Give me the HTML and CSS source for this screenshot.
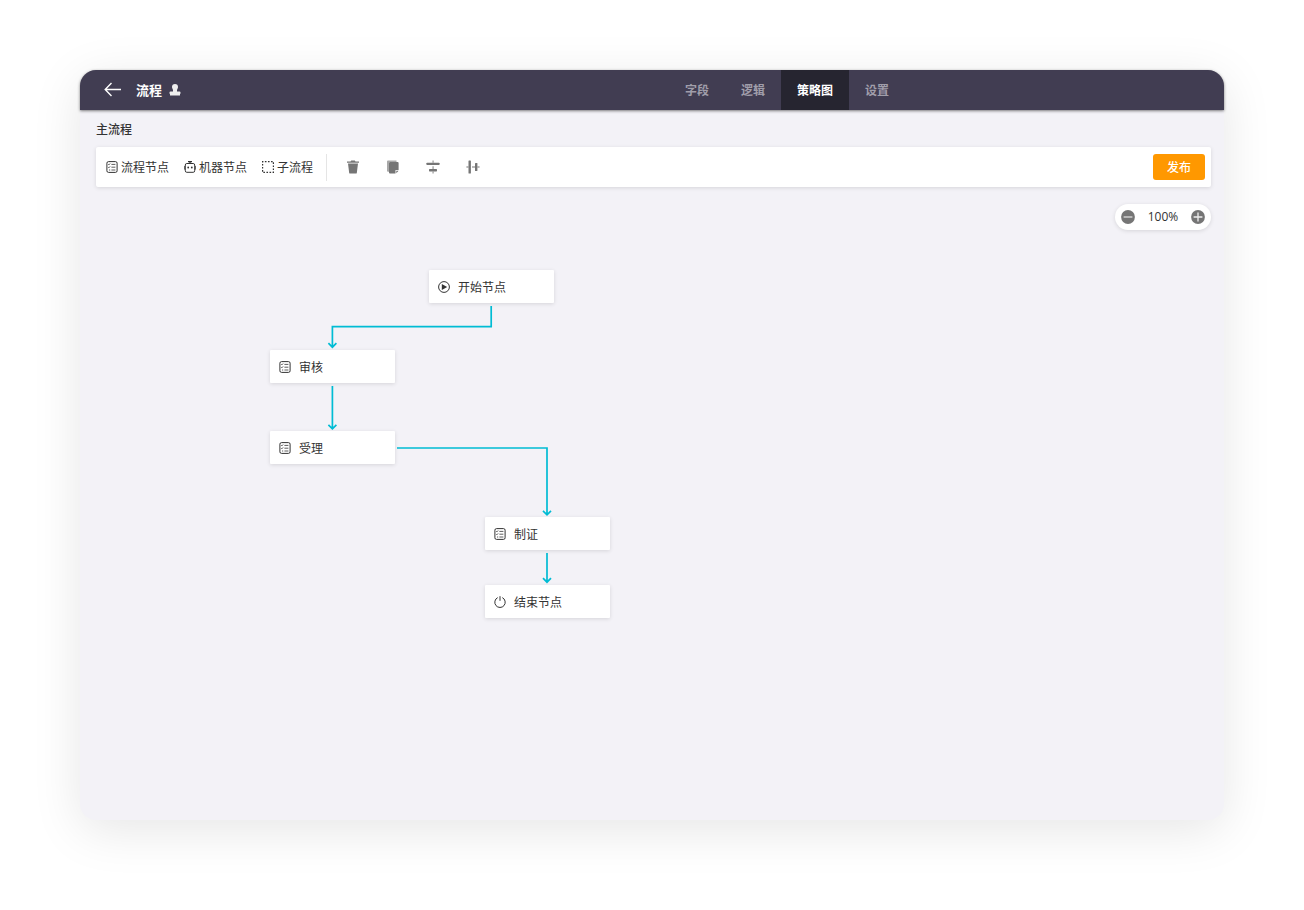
FILE: index.html
```html
<!DOCTYPE html>
<html lang="zh-CN">
<head>
<meta charset="utf-8">
<meta name="viewport" content="width=device-width, initial-scale=1">
<title>流程 - 策略图</title>
<link rel="stylesheet" href="styles.css">
</head>
<body>
<svg class="sprite" aria-hidden="true">
  <symbol id="icon-form" viewBox="0 0 12 12">
    <rect x="0.9" y="0.6" width="10.2" height="10.8" rx="1.6" fill="none" stroke="currentColor" stroke-width="1"/>
    <path d="M2.200 3.200l.7.7 1.200-1.400M2.200 6.100l.7.7 1.200-1.400M3 9h1.200M5.400 3.400h4M5.400 6.200h4M5.400 9h4" fill="none" stroke="currentColor" stroke-width="0.8"/>
  </symbol>
</svg>
<div class="window">
  <header class="topbar">
    <div class="title-group">
      <button class="back" type="button" aria-label="返回">
        <svg width="18" height="16" viewBox="0 0 18 16" fill="none" stroke="currentColor" stroke-width="1.400"><path d="M17 7.500H1.500M7.500 1L1.200 7.500l6.300 6.500"/></svg>
      </button>
      <h1 class="title">流程</h1>
      <svg class="stamp" width="12" height="12" viewBox="0 0 12 12" fill="currentColor" aria-hidden="true"><path d="M6 0a3 3 0 0 1 3 3c0 1.500-1 2-1 3.600V7.400h2.500a1 1 0 0 1 1 1V9.800H.5V8.400a1 1 0 0 1 1-1H4V6.600C4 5 3 4.500 3 3a3 3 0 0 1 3-3zM1 9.800h10v1.600H1z"/></svg>
    </div>
    <nav class="tabs">
      <a class="tab" href="#fields">字段</a>
      <a class="tab" href="#logic">逻辑</a>
      <a class="tab tab-active" href="#strategy" aria-current="page">策略图</a>
      <a class="tab" href="#settings">设置</a>
    </nav>
  </header>
  <main class="workspace">
    <h2 class="subtitle">主流程</h2>
    <div class="toolbar">
      <div class="tools">
        <button class="tool" type="button"><svg width="12" height="12" aria-hidden="true"><use href="#icon-form"/></svg>流程节点</button>
        <button class="tool" type="button"><svg width="12" height="12" viewBox="0 0 12 12" aria-hidden="true"><path d="M4 .7h4M6 .7v1.800" stroke="currentColor" stroke-width="1.300"/><rect x="1.300" y="2.500" width="9.400" height="8.800" rx="1.500" fill="none" stroke="currentColor"/><path d="M.4 5v3.600M11.600 5v3.600" stroke="currentColor" stroke-width="0.800"/><circle cx="4.200" cy="6.500" r="0.900" fill="currentColor"/><circle cx="7.800" cy="6.500" r="0.900" fill="currentColor"/></svg>机器节点</button>
        <button class="tool" type="button"><svg width="12" height="12" viewBox="0 0 12 12" aria-hidden="true"><rect x="0.600" y="0.600" width="10.800" height="10.800" fill="none" stroke="currentColor" stroke-width="1.200" stroke-dasharray="1.600 1.485" stroke-dashoffset="0.800"/></svg>子流程</button>
      </div>
      <div class="actions">
        <button class="action" type="button" aria-label="删除"><svg width="14" height="14" viewBox="0 0 14 14" fill="currentColor"><path d="M1 1.500h3.500L5.200.5h3.600l.7 1H13v1.300H1zM2 3.400h10L10.800 13a.8.8 0 0 1-.8.600H4a.8.8 0 0 1-.8-.6z"/></svg></button>
        <button class="action" type="button" aria-label="复制"><svg width="14" height="14" viewBox="0 0 14 14"><path d="M1 1.500A1 1 0 0 1 2 .5h8.500v1.500H3v9.700H2a1 1 0 0 1-1-1z" fill="#a8a8a8"/><path d="M4 2h7.600a1 1 0 0 1 1 1v7H9.500v3.400H4a1 1 0 0 1-1-1V3a1 1 0 0 1 1-1zM10.300 10.800h2.300l-2.300 2.500z" fill="currentColor"/></svg></button>
        <button class="action" type="button" aria-label="水平居中对齐"><svg width="14" height="14" viewBox="0 0 14 14" fill="currentColor"><rect x="0.500" y="2.700" width="13" height="2.400" rx="0.600"/><rect x="3" y="9" width="8" height="2.400" rx="0.600"/><path d="M6.600 0.500h.9v2.200h-.9zM6.600 6.200h.9V9h-.9zM6.600 11.400h.9v2.200h-.9z"/></svg></button>
        <button class="action" type="button" aria-label="垂直居中对齐"><svg width="14" height="14" viewBox="0 0 14 14" fill="currentColor"><rect x="2.500" y="0.500" width="2.400" height="13" rx="0.600"/><rect x="9" y="3" width="2.400" height="8" rx="0.600"/><path d="M.4 6.600h2.100v.9H.4zM6 6.600h3v.9H6zM11.400 6.600h2.200v.9h-2.200z"/></svg></button>
      </div>
      <button class="publish" type="button">发布</button>
    </div>
    <section class="canvas" aria-label="流程画布">
      <div class="zoom">
        <button class="zoom-button" type="button" aria-label="缩小"><svg width="14" height="14" viewBox="0 0 14 14"><circle cx="7" cy="7" r="6.900" fill="currentColor"/><path d="M2.600 7h8.800" stroke="#ddd" stroke-width="1.300"/></svg></button>
        <span class="zoom-value">100%</span>
        <button class="zoom-button" type="button" aria-label="放大"><svg width="14" height="14" viewBox="0 0 14 14"><circle cx="7" cy="7" r="6.900" fill="currentColor"/><path d="M2.600 7h8.800M7 2.600v8.800" stroke="#eee" stroke-width="1.300"/></svg></button>
      </div>
      <svg class="links" width="600" height="440" aria-hidden="true">
        <path d="M411.200 119v20.600H252.400V160M248.400 156.200l4 4 4-4"/>
        <path d="M252.400 199v43M248.400 237.800l4 4 4-4"/>
        <path d="M317 261h150v67M463 323.800l4 4 4-4"/>
        <path d="M467 366v29M463 391.200l4 4 4-4"/>
      </svg>
      <div class="node node-start"><svg width="12" height="12" viewBox="0 0 12 12" aria-hidden="true"><circle cx="6" cy="6" r="5.400" fill="none" stroke="currentColor"/><path d="M3.800 3L9.200 6 3.800 9z" fill="currentColor"/></svg>开始节点</div>
      <div class="node node-review"><svg width="12" height="12" aria-hidden="true"><use href="#icon-form"/></svg>审核</div>
      <div class="node node-accept"><svg width="12" height="12" aria-hidden="true"><use href="#icon-form"/></svg>受理</div>
      <div class="node node-issue"><svg width="12" height="12" aria-hidden="true"><use href="#icon-form"/></svg>制证</div>
      <div class="node node-end"><svg width="12" height="12" viewBox="0 0 12 12" fill="none" stroke="currentColor" aria-hidden="true"><path d="M3.700 1.600A5.200 5.200 0 1 0 8.300 1.600M6 .2v4.600"/></svg>结束节点</div>
    </section>
  </main>
</div>
</body>
</html>
```
FILE: styles.css
```css
* {
  box-sizing: border-box;
}

body {
  display: flex;
  min-height: 100vh;
  margin: 0;
  padding: 70px 80px 90px;
  background: #fff;
  color: #333;
  font: 12px/18px "Noto Sans CJK SC", sans-serif;
}

button {
  display: flex;
  align-items: center;
  justify-content: center;
  margin: 0;
  padding: 0;
  border: 0;
  background: none;
  color: inherit;
  font: inherit;
  cursor: pointer;
}

svg {
  flex: none;
  display: block;
}

.sprite {
  position: absolute;
  width: 0;
  height: 0;
}

.window {
  display: flex;
  flex: 1;
  flex-direction: column;
  border-radius: 16px;
  background: #f3f2f7;
  box-shadow: 0 10px 50px rgba(0, 0, 0, 0.1);
}

.topbar {
  display: grid;
  grid-template-columns: 24fr auto 13fr;
  height: 40px;
  border-radius: 16px 16px 0 0;
  background: #413d52;
  box-shadow: 0 1px 3px rgba(0, 0, 0, 0.5);
  color: #fff;
}

.title-group {
  display: flex;
  align-items: center;
  padding-left: 24px;
}

.title {
  margin: 0 7px 0 14px;
  font-size: 13px;
  font-weight: 700;
}

.stamp {
  color: #eee;
}

.tabs {
  display: flex;
}

.tab {
  display: flex;
  align-items: center;
  padding: 0 16px;
  color: #a09eaa;
  font-weight: 700;
  text-decoration: none;
}

.tab-active {
  background: #262530;
  color: #fff;
}

.workspace {
  display: flex;
  flex: 1;
  flex-direction: column;
}

.subtitle {
  margin: 10px 16px 9px;
  font-size: 12px;
  font-weight: 500;
}

.toolbar {
  display: flex;
  align-items: center;
  height: 40px;
  margin: 0 13px 0 16px;
  padding: 0 6px 0 10px;
  border-radius: 2px;
  background: #fff;
  box-shadow: 0 1px 4px rgba(0, 0, 0, 0.12);
}

.tools {
  display: flex;
  align-items: center;
  gap: 15px;
  height: 27px;
  padding-right: 13px;
  border-right: 1px solid #e5e5e5;
}

.tool {
  gap: 3px;
}

.actions {
  display: flex;
  gap: 26px;
  margin-left: 19px;
}

.action,
.zoom-button {
  color: #757575;
}

.publish {
  width: 52px;
  height: 26px;
  margin-left: auto;
  border-radius: 3px;
  background: #ff9800;
  color: #fff;
  font-weight: 500;
}

.canvas {
  position: relative;
  flex: 1;
  min-height: 440px;
}

.zoom {
  display: flex;
  align-items: center;
  justify-content: space-between;
  width: 96px;
  height: 26px;
  margin: 17px 13px 0 auto;
  padding: 0 6px;
  border-radius: 13px;
  background: #fff;
  box-shadow: 0 1px 4px rgba(0, 0, 0, 0.12);
}

.zoom-value {
  font-family: "Open Sans", "Noto Sans", sans-serif;
}

.links {
  position: absolute;
  top: 0;
  left: 0;
  fill: none;
  stroke: #00bcd4;
  stroke-width: 1.7;
}

.node {
  position: absolute;
  display: flex;
  align-items: center;
  gap: 8px;
  width: 125px;
  height: 33px;
  padding: 0 9px;
  border-radius: 1px;
  background: #fff;
  box-shadow: 0 1px 4px rgba(0, 0, 0, 0.12);
}

.node-start {
  top: 83px;
  left: 349px;
}

.node-review {
  top: 163px;
  left: 190px;
}

.node-accept {
  top: 244px;
  left: 190px;
}

.node-issue {
  top: 330px;
  left: 405px;
}

.node-end {
  top: 398px;
  left: 405px;
}
```
